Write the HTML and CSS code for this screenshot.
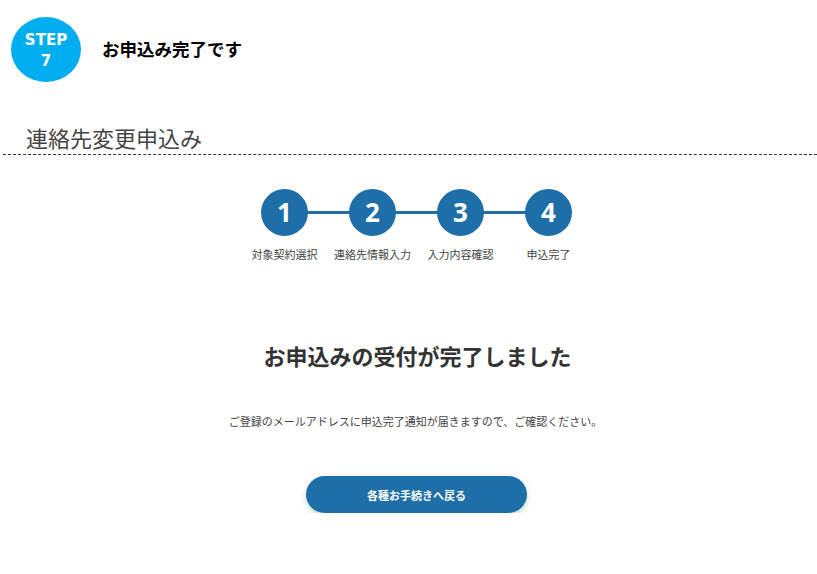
FILE: index.html
```html
<!DOCTYPE html>
<html lang="ja">
<head>
<meta charset="utf-8">
<link rel="stylesheet" href="styles.css">
</head>
<body>
<header class="top">
  <div class="step-badge"><span>STEP</span><span>7</span></div>
  <h1 class="top-title">お申込み完了です</h1>
</header>
<h2 class="section-title">連絡先変更申込み</h2>
<div class="divider"></div>
<div class="steps">
  <div class="step"><div class="num">1</div><div class="label">対象契約選択</div></div>
  <div class="step"><div class="num">2</div><div class="label">連絡先情報入力</div></div>
  <div class="step"><div class="num">3</div><div class="label">入力内容確認</div></div>
  <div class="step"><div class="num">4</div><div class="label">申込完了</div></div>
</div>
<h3 class="done-title">お申込みの受付が完了しました</h3>
<p class="done-text">ご登録のメールアドレスに申込完了通知が届きますので、ご確認ください。</p>
<div class="btn-wrap"><button class="back-btn">各種お手続きへ戻る</button></div>
</body>
</html>
```
FILE: styles.css
```css
html, body {
  margin: 0;
  padding: 0;
  background: #fff;
  font-family: "Noto Sans CJK JP", "Noto Sans", sans-serif;
  color: #333;
}
.top {
  display: flex;
  align-items: center;
  padding: 17px 0 0 11px;
}
.step-badge {
  width: 70px;
  height: 65px;
  box-sizing: border-box;
  padding-top: 3px;
  border-radius: 50%;
  background: #00aeef;
  color: #fff;
  display: flex;
  flex-direction: column;
  align-items: center;
  justify-content: center;
  font-family: "DejaVu Sans", sans-serif;
  font-weight: 700;
  font-size: 15px;
  line-height: 21px;
}
.top-title {
  margin: 0 0 0 21px;
  font-size: 17.5px;
  font-weight: 700;
  color: #000;
  position: relative;
  top: -1px;
}
.section-title {
  margin: 40px 0 0 26px;
  font-size: 22px;
  font-weight: 400;
  color: #444;
  line-height: 30px;
}
.divider {
  margin: 2px 0 0 3px;
  border-top: 1px dashed #333;
}
.steps {
  display: flex;
  justify-content: center;
  margin-top: 34px;
  padding-left: 16px;
}
.step {
  width: 88px;
  display: flex;
  flex-direction: column;
  align-items: center;
  position: relative;
}
.step + .step::before {
  content: "";
  position: absolute;
  top: 22px;
  left: -44px;
  width: 88px;
  height: 3px;
  background: #1e6fa8;
  z-index: 0;
}
.num {
  width: 47px;
  height: 47px;
  border-radius: 50%;
  background: #1e6fa8;
  color: #fff;
  font-family: "Noto Sans", sans-serif;
  font-weight: 700;
  font-size: 26px;
  line-height: 47px;
  text-align: center;
  position: relative;
  z-index: 1;
}
.label {
  margin-top: 11px;
  font-size: 11px;
  line-height: 14px;
  color: #444;
  white-space: nowrap;
}
.done-title {
  margin: 79px 0 0 0;
  text-align: center;
  font-size: 22px;
  font-weight: 700;
  line-height: 30px;
  color: #333;
  padding-left: 18px;
}
.done-text {
  margin: 43px 0 0 0;
  text-align: center;
  font-size: 11px;
  line-height: 16px;
  color: #444;
  padding-left: 14px;
}
.btn-wrap {
  display: flex;
  justify-content: center;
  margin-top: 47px;
  padding-left: 16px;
}
.back-btn {
  width: 221px;
  height: 37px;
  border: none;
  border-radius: 19px;
  background: #1e6fa8;
  color: #fff;
  font-family: "Noto Sans CJK JP", sans-serif;
  font-weight: 700;
  font-size: 11px;
  box-shadow: 0 3px 6px rgba(60, 140, 100, 0.3);
}
```
